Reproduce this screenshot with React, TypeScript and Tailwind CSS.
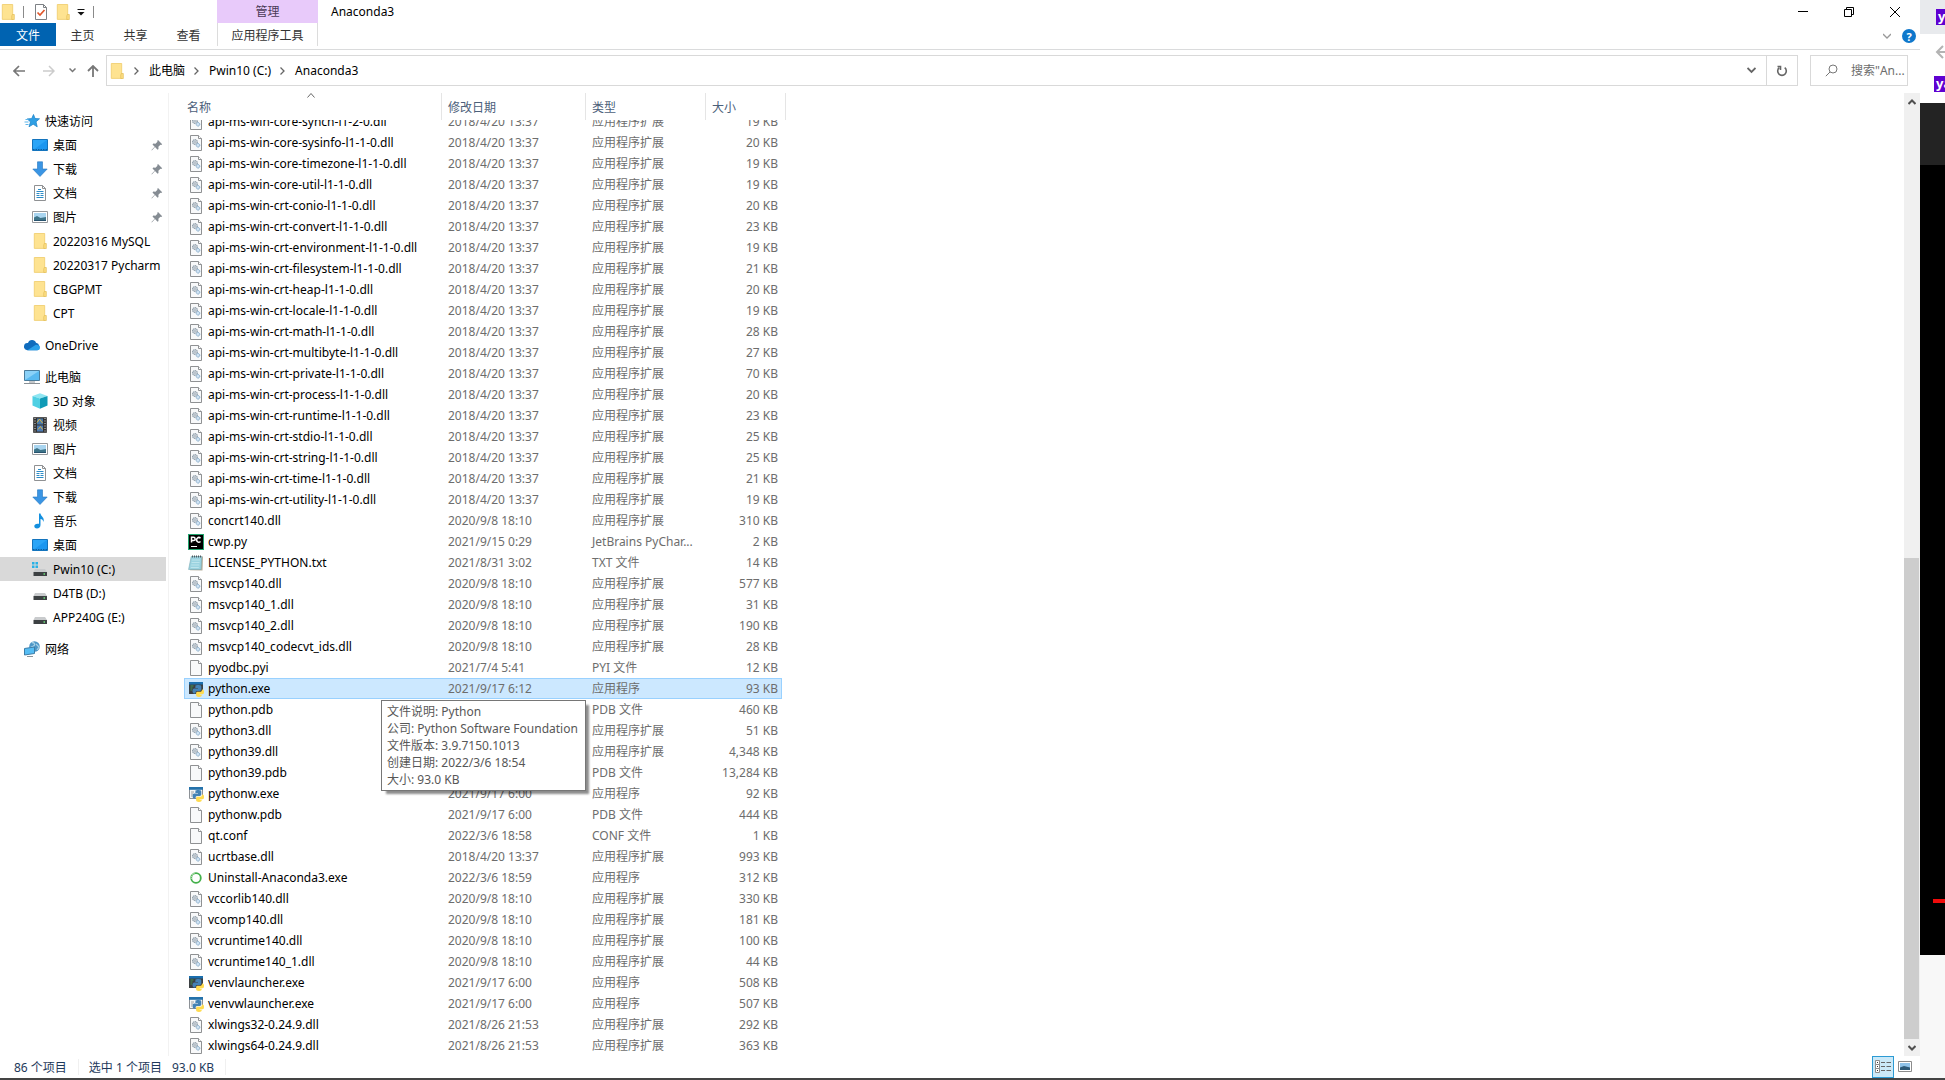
import { useLayoutEffect, useRef } from "react";
import type { ReactNode } from "react";
import clsx from "clsx";

type FileKind = "dll" | "blank" | "txt" | "pycharm" | "python" | "pythonw" | "ring";
type FileRow = [name: string, date: string, type: string, size: string, kind: FileKind];

const DLL = "应用程序扩展";
const EXE = "应用程序";

const files: FileRow[] = [
  ["api-ms-win-core-synch-l1-2-0.dll", "2018/4/20 13:37", DLL, "19 KB", "dll"],
  ["api-ms-win-core-sysinfo-l1-1-0.dll", "2018/4/20 13:37", DLL, "20 KB", "dll"],
  ["api-ms-win-core-timezone-l1-1-0.dll", "2018/4/20 13:37", DLL, "19 KB", "dll"],
  ["api-ms-win-core-util-l1-1-0.dll", "2018/4/20 13:37", DLL, "19 KB", "dll"],
  ["api-ms-win-crt-conio-l1-1-0.dll", "2018/4/20 13:37", DLL, "20 KB", "dll"],
  ["api-ms-win-crt-convert-l1-1-0.dll", "2018/4/20 13:37", DLL, "23 KB", "dll"],
  ["api-ms-win-crt-environment-l1-1-0.dll", "2018/4/20 13:37", DLL, "19 KB", "dll"],
  ["api-ms-win-crt-filesystem-l1-1-0.dll", "2018/4/20 13:37", DLL, "21 KB", "dll"],
  ["api-ms-win-crt-heap-l1-1-0.dll", "2018/4/20 13:37", DLL, "20 KB", "dll"],
  ["api-ms-win-crt-locale-l1-1-0.dll", "2018/4/20 13:37", DLL, "19 KB", "dll"],
  ["api-ms-win-crt-math-l1-1-0.dll", "2018/4/20 13:37", DLL, "28 KB", "dll"],
  ["api-ms-win-crt-multibyte-l1-1-0.dll", "2018/4/20 13:37", DLL, "27 KB", "dll"],
  ["api-ms-win-crt-private-l1-1-0.dll", "2018/4/20 13:37", DLL, "70 KB", "dll"],
  ["api-ms-win-crt-process-l1-1-0.dll", "2018/4/20 13:37", DLL, "20 KB", "dll"],
  ["api-ms-win-crt-runtime-l1-1-0.dll", "2018/4/20 13:37", DLL, "23 KB", "dll"],
  ["api-ms-win-crt-stdio-l1-1-0.dll", "2018/4/20 13:37", DLL, "25 KB", "dll"],
  ["api-ms-win-crt-string-l1-1-0.dll", "2018/4/20 13:37", DLL, "25 KB", "dll"],
  ["api-ms-win-crt-time-l1-1-0.dll", "2018/4/20 13:37", DLL, "21 KB", "dll"],
  ["api-ms-win-crt-utility-l1-1-0.dll", "2018/4/20 13:37", DLL, "19 KB", "dll"],
  ["concrt140.dll", "2020/9/8 18:10", DLL, "310 KB", "dll"],
  ["cwp.py", "2021/9/15 0:29", "JetBrains PyChar...", "2 KB", "pycharm"],
  ["LICENSE_PYTHON.txt", "2021/8/31 3:02", "TXT 文件", "14 KB", "txt"],
  ["msvcp140.dll", "2020/9/8 18:10", DLL, "577 KB", "dll"],
  ["msvcp140_1.dll", "2020/9/8 18:10", DLL, "31 KB", "dll"],
  ["msvcp140_2.dll", "2020/9/8 18:10", DLL, "190 KB", "dll"],
  ["msvcp140_codecvt_ids.dll", "2020/9/8 18:10", DLL, "28 KB", "dll"],
  ["pyodbc.pyi", "2021/7/4 5:41", "PYI 文件", "12 KB", "blank"],
  ["python.exe", "2021/9/17 6:12", EXE, "93 KB", "python"],
  ["python.pdb", "2021/9/17 6:00", "PDB 文件", "460 KB", "blank"],
  ["python3.dll", "2021/9/17 6:00", DLL, "51 KB", "dll"],
  ["python39.dll", "2021/9/17 6:00", DLL, "4,348 KB", "dll"],
  ["python39.pdb", "2021/9/17 6:00", "PDB 文件", "13,284 KB", "blank"],
  ["pythonw.exe", "2021/9/17 6:00", EXE, "92 KB", "pythonw"],
  ["pythonw.pdb", "2021/9/17 6:00", "PDB 文件", "444 KB", "blank"],
  ["qt.conf", "2022/3/6 18:58", "CONF 文件", "1 KB", "blank"],
  ["ucrtbase.dll", "2018/4/20 13:37", DLL, "993 KB", "dll"],
  ["Uninstall-Anaconda3.exe", "2022/3/6 18:59", EXE, "312 KB", "ring"],
  ["vccorlib140.dll", "2020/9/8 18:10", DLL, "330 KB", "dll"],
  ["vcomp140.dll", "2020/9/8 18:10", DLL, "181 KB", "dll"],
  ["vcruntime140.dll", "2020/9/8 18:10", DLL, "100 KB", "dll"],
  ["vcruntime140_1.dll", "2020/9/8 18:10", DLL, "44 KB", "dll"],
  ["venvlauncher.exe", "2021/9/17 6:00", EXE, "508 KB", "python"],
  ["venvwlauncher.exe", "2021/9/17 6:00", EXE, "507 KB", "pythonw"],
  ["xlwings32-0.24.9.dll", "2021/8/26 21:53", DLL, "292 KB", "dll"],
  ["xlwings64-0.24.9.dll", "2021/8/26 21:53", DLL, "363 KB", "dll"],
];

const SELECTED = "python.exe";

function Svg({ children, className }: { children: ReactNode; className?: string }) {
  return (
    <svg viewBox="0 0 16 16" aria-hidden="true" className={clsx("size-4 shrink-0", className)}>
      {children}
    </svg>
  );
}

/* ---------- 文件图标 ---------- */

function PagePaths() {
  return (
    <>
      <path d="M2.500.5h8l3 3v12h-11z" fill="#f8f9fa" stroke="#8f9193" />
      <path d="M10.500.5v3h3" fill="#fff" stroke="#8f9193" />
    </>
  );
}

function PythonLogo() {
  return (
    <>
      <path d="M7.500 4.500c.5-.7 4.500-.8 5.300 0 .6.6.5 1 .5 3.800 0 1.200-.7 1.700-1.700 1.700H9c-1 0-1.500.8-1.500 2.500H6.300c-1.500 0-1.800-1.500-1.800-2.700S5 7.500 6.300 7.500H10V7H7.300z" fill="#4482b5" />
      <path d="M14 8.500h.5c1.200 0 1.500 1.200 1.500 2.500s-.4 2.300-1.600 2.300h-2.800v.5h2.200c0 1.700-1 2.200-2.800 2.200s-2.900-.6-2.900-1.700v-2c0-1 .6-1.500 1.500-1.500h2.600c1.100 0 1.800-.7 1.800-2.300z" fill="#ffdb4f" />
    </>
  );
}

function FileIcon({ kind }: { kind: FileKind }) {
  switch (kind) {
    case "dll":
      return (
        <Svg>
          <PagePaths />
          <circle cx="7" cy="7" r="2.300" fill="#dfe5ea" stroke="#8b9aa6" strokeWidth="1.300" strokeDasharray="1.200 .4" />
          <circle cx="7" cy="7" r=".8" fill="#8b9aa6" />
          <circle cx="10" cy="10.300" r="1.800" fill="#cfe2f3" stroke="#85abca" strokeDasharray="1.200 .3" />
        </Svg>
      );
    case "blank":
      return (
        <Svg>
          <PagePaths />
        </Svg>
      );
    case "txt":
      return (
        <Svg>
          <path d="M4 1.500h11l-.5 14-12.500-.2z" fill="#b7b09c" />
          <path d="M3.200 1.500h10.600l-.8 13H.6z" fill="#9bd3e0" stroke="#78a9b5" strokeWidth=".6" />
          <path d="M4 5h8M3.600 7.500h8M3.200 10h8M2.800 12.500h8" stroke="#c4e8ef" strokeWidth=".8" />
          <path d="M4 1.500h10" stroke="#4e5a60" strokeWidth="2" strokeDasharray="1 1" />
        </Svg>
      );
    case "pycharm":
      return (
        <Svg>
          <rect width="16" height="16" fill="#21a46e" />
          <rect x="1" y="1" width="14" height="14" fill="#000" />
          <path d="M3.500 8.500V3.300h2a1.500 1.500 0 0 1 0 3.200h-2M12.500 4.200a2.300 2.300 0 1 0 0 3.300" fill="none" stroke="#fff" strokeWidth="1.500" />
          <path d="M3 12.500h6" stroke="#fff" />
        </Svg>
      );
    case "python":
      return (
        <Svg>
          <path d="M1 1h14v12H1z" fill="#3c4043" />
          <path d="M1 1h14v2.500H1z" fill="#1b6fae" />
          <path d="M2.500 5h3M2.500 7h2M2.500 9h1.500" stroke="#3f9a55" />
          <PythonLogo />
        </Svg>
      );
    case "pythonw":
      return (
        <Svg>
          <path d="M1.500 1.500h13v11h-13z" fill="#f4f5f6" stroke="#8c9196" />
          <path d="M1 1h14v2.800H1z" fill="#2472ab" />
          <path d="M3 6h3M3 8h2M3 10h1" stroke="#9aa0a5" />
          <PythonLogo />
        </Svg>
      );
    case "ring":
      return (
        <Svg>
          <circle cx="8" cy="8" r="4.800" fill="none" stroke="#43b04a" strokeWidth="1.800" />
          <path d="M3.300 9A4.800 4.800 0 0 1 7 3.300" fill="none" stroke="#a9dcac" strokeWidth="1.800" strokeDasharray="1.200 .7" />
        </Svg>
      );
  }
}

/* ---------- 导航窗格图标 ---------- */

function FolderIcon({ className }: { className?: string }) {
  return (
    <Svg className={className}>
      <path d="M2.300.5h10.400v14.900H2.300z" fill="#fee391" stroke="#efcb68" strokeWidth=".8" />
      <path d="M12.300 10.500h2v5h-2.500v-3.500z" fill="#fddf83" stroke="#e3bd56" strokeWidth=".7" />
    </Svg>
  );
}

const StarIcon = () => (
  <Svg>
    <path d="m9.500 1.500 1.500 4 4.500.3-3.500 3 1.200 5-4-2.600-4.200 2.600 1.500-4.900-3.200-3 4.400-.3z" fill="#2f9fe4" stroke="#2187cb" strokeWidth=".8" />
    <path d="M1.500 6.500h3M.5 9h4M1.500 11.500h3" stroke="#5db5ea" />
  </Svg>
);

const DesktopIcon = () => (
  <Svg>
    <path d="M.5 2.500h15v11H.5z" fill="#2ba5f7" stroke="#1474bd" />
    <path d="M1 13 15 3v10z" fill="#1c97f0" />
    <path d="M1 12.500h14" stroke="#0e5f9f" strokeDasharray="1.500 1" />
  </Svg>
);

const DownloadIcon = () => (
  <Svg>
    <path d="M5.500.8h5V8h4.700L8 15.500.8 8h4.700z" fill="#3a95e4" stroke="#2376c0" strokeWidth=".6" />
  </Svg>
);

const DocumentIcon = () => (
  <Svg>
    <path d="M2.500.5h8l3 3v12h-11z" fill="#fff" stroke="#8f9193" />
    <path d="M10.500.5v3h3" fill="none" stroke="#8f9193" />
    <path d="M6 4.500h3M4.500 6.500h7M4.500 8.500h3M8.500 8.500h3M4.500 10.500h3M8.500 10.500h3M4.500 12.500h7" stroke="#2d8cc7" />
  </Svg>
);

const PictureIcon = () => (
  <Svg>
    <path d="M.5 2.500h15v11H.5z" fill="#fff" stroke="#96999c" />
    <path d="M2 4h12v8H2z" fill="#a9d5f0" />
    <path d="M2 8.500 5 7l3.500 2L14 8v4H2z" fill="#3e7489" />
    <path d="M2 11h12v1H2z" fill="#28536e" />
  </Svg>
);

const CloudIcon = () => (
  <Svg>
    <path d="M4 6a4.200 4.200 0 0 1 8-.2 4 4 0 0 1 1.500 7.400H3.200A3.600 3.600 0 0 1 4 6z" fill="#0f6cbd" />
    <path d="m3.500 13.300 8.300-5.500c2 0 4.200.7 4.200 3 0 1.700-1.200 2.500-2.500 2.500z" fill="#2aa1ea" />
  </Svg>
);

const ComputerIcon = () => (
  <Svg>
    <path d="M.5 1.500h15v10H.5z" fill="#58b9f0" stroke="#4a7c9c" />
    <path d="M1 2h14L1 11z" fill="#8ad1f8" />
    <path d="M0 14.500h16M5 13h6" stroke="#8a9095" />
  </Svg>
);

const CubeIcon = () => (
  <Svg>
    <path d="M8 .3 15.500 3 8 5.500.5 3z" fill="#8fe6f2" />
    <path d="M.5 3 8 5.500v10.200L.5 12.500z" fill="#4fd0e3" />
    <path d="M15.500 3 8 5.500v10.200l7.500-3.200z" fill="#0f9ab6" />
  </Svg>
);

const VideoIcon = () => (
  <Svg>
    <path d="M1.500.5h13v15h-13z" fill="#333" stroke="#555" />
    <path d="M5 1.500h6v6H5z" fill="#4a79a8" />
    <path d="M5 8.500h6v6H5z" fill="#4c7bb4" />
    <path d="M5 5.500 7.500 2l3 4M6 12.500l2.500-3 2 3" fill="none" stroke="#d9b544" />
    <path d="M3 1v14M13 1v14" stroke="#ddd" strokeDasharray="1 1.500" />
  </Svg>
);

const MusicIcon = () => (
  <Svg>
    <path d="M7 .5h1.500c.3 3 4.500 4 3 8.500-.4-2-1.500-2.800-3-3V12c0 2-1.500 3.500-3.500 3.500S2.300 14.500 2.300 13 4 10.300 7 10.800z" fill="#1490df" />
  </Svg>
);

function DriveIcon({ system }: { system?: boolean }) {
  return (
    <Svg>
      {system && <path d="M0 1h2.500v2.500H0zM3.500 1H6v2.500H3.500zM0 4.500h2.500V7H0zM3.500 4.500H6V7H3.500z" fill="#29b1e6" />}
      <path d="M3 8h10l2 3H1.500z" fill="#c9cbcd" />
      <path d="M1.500 11H15v4H1.500z" fill="#3d4143" />
      <path d="M11.500 13h1.500" stroke="#6be07a" strokeWidth="1.500" />
    </Svg>
  );
}

const NetworkIcon = () => (
  <Svg>
    <circle cx="10.500" cy="5.500" r="5.300" fill="#4d96c6" />
    <path d="M8 1.500c2 0 3 1 2.500 2.500S7 6 6 7M12 3l3 3-2 3" fill="none" stroke="#a5d0e6" strokeWidth="1.300" />
    <path d="M.5 7.500 10.500 6v6.500L.5 14z" fill="#55bdf4" stroke="#3c7da8" />
    <path d="M3 15.500h6" stroke="#8b9499" />
  </Svg>
);

const PinIcon = () => (
  <svg viewBox="0 0 12 12" aria-hidden="true" className="size-3 shrink-0 fill-[#858c93]">
    <path d="m7 1 4.200 4.200-1 .8-.8-.2-2 2 .1 2.200-.9.700-2.600-2.600L.8 11.400l-.3-.3 3.200-3.300L1.500 5.500l.8-.9 2.200.1 2-2-.3-.8z" />
  </svg>
);

interface NavItemProps {
  icon: ReactNode;
  label: string;
  root?: boolean;
  pinned?: boolean;
  active?: boolean;
}

function NavItem({ icon, label, root, pinned, active }: NavItemProps) {
  return (
    <li>
      <a
        href="#"
        className={clsx(
          "mr-0.5 flex h-6 items-center gap-[5px] pr-[3px]",
          root ? "pl-6" : "pl-8",
          active && "bg-[#d9d9d9]"
        )}
      >
        {icon}
        <span className="flex-1 whitespace-nowrap">{label}</span>
        {pinned && <PinIcon />}
      </a>
    </li>
  );
}

function Sidebar() {
  return (
    <nav aria-label="导航窗格" className="flex w-[169px] shrink-0 flex-col gap-2 border-r border-[#f2f2f2] pt-4">
      <ul>
        <NavItem root icon={<StarIcon />} label="快速访问" />
        <NavItem pinned icon={<DesktopIcon />} label="桌面" />
        <NavItem pinned icon={<DownloadIcon />} label="下载" />
        <NavItem pinned icon={<DocumentIcon />} label="文档" />
        <NavItem pinned icon={<PictureIcon />} label="图片" />
        <NavItem icon={<FolderIcon />} label="20220316 MySQL" />
        <NavItem icon={<FolderIcon />} label="20220317 Pycharm" />
        <NavItem icon={<FolderIcon />} label="CBGPMT" />
        <NavItem icon={<FolderIcon />} label="CPT" />
      </ul>
      <ul>
        <NavItem root icon={<CloudIcon />} label="OneDrive" />
      </ul>
      <ul>
        <NavItem root icon={<ComputerIcon />} label="此电脑" />
        <NavItem icon={<CubeIcon />} label="3D 对象" />
        <NavItem icon={<VideoIcon />} label="视频" />
        <NavItem icon={<PictureIcon />} label="图片" />
        <NavItem icon={<DocumentIcon />} label="文档" />
        <NavItem icon={<DownloadIcon />} label="下载" />
        <NavItem icon={<MusicIcon />} label="音乐" />
        <NavItem icon={<DesktopIcon />} label="桌面" />
        <NavItem active icon={<DriveIcon system />} label="Pwin10 (C:)" />
        <NavItem icon={<DriveIcon />} label="D4TB (D:)" />
        <NavItem icon={<DriveIcon />} label="APP240G (E:)" />
      </ul>
      <ul>
        <NavItem root icon={<NetworkIcon />} label="网络" />
      </ul>
    </nav>
  );
}

function TitleBar() {
  return (
    <header className="flex h-[23px] items-center">
      <div className="flex w-[217px] items-center">
        <FolderIcon />
        <span className="ml-[7px] h-3 w-px bg-[#8a8a8a]" />
        <button type="button" aria-label="属性" className="ml-[9px]">
          <Svg>
            <path d="M2.500.5h8l3 3v12h-11z" fill="#fff" stroke="#7d8185" />
            <path d="M10.500.5v3h3" fill="none" stroke="#7d8185" />
            <path d="m4.500 8.500 2.500 2.500 4.500-5" fill="none" stroke="#e0562b" strokeWidth="1.700" />
          </Svg>
        </button>
        <button type="button" aria-label="新建文件夹" className="ml-[6px]">
          <FolderIcon />
        </button>
        <button type="button" aria-label="自定义快速访问工具栏" className="ml-[6px]">
          <svg viewBox="0 0 8 8" className="h-2 w-2">
            <path d="M.5 1.500h7" stroke="#111" />
            <path d="M.5 4h7L4 7.500z" fill="#111" />
          </svg>
        </button>
        <span className="ml-[8px] h-3 w-px bg-[#8a8a8a]" />
      </div>
      <div className="flex h-full w-[101px] items-center justify-center bg-[#e8cafa] text-[#4b3a57]">管理</div>
      <h1 className="ml-[13px] flex-1">Anaconda3</h1>
      <div className="mr-0.5 flex">
        <button type="button" aria-label="最小化" className="flex h-5 w-[46px] items-center justify-center">
          <span className="h-px w-2.5 bg-black" />
        </button>
        <button type="button" aria-label="还原" className="flex h-5 w-[46px] items-center justify-center">
          <svg viewBox="0 0 10 10" className="size-2.5" fill="none" stroke="#000">
            <path d="M.5 2.500h7v7h-7zM2.500 2.500v-2h7v7h-2" />
          </svg>
        </button>
        <button type="button" aria-label="关闭" className="flex h-5 w-[46px] items-center justify-center">
          <svg viewBox="0 0 10 10" className="size-2.5" fill="none" stroke="#000">
            <path d="m0 0 10 10M10 0 0 10" />
          </svg>
        </button>
      </div>
    </header>
  );
}

function RibbonTabs() {
  return (
    <div className="flex h-[27px] items-start border-b border-[#dadbdc] text-[#333]">
      <button type="button" className="h-[23px] w-14 bg-[#0063b1] pt-px text-white">文件</button>
      <button type="button" className="h-[23px] w-[53px] pt-px">主页</button>
      <button type="button" className="h-[23px] w-[53px] pt-px">共享</button>
      <button type="button" className="mr-0.5 h-[23px] w-[53px] pt-px">查看</button>
      <button type="button" className="h-[23px] w-[101px] border-x border-[#dcdcdc] pt-px">应用程序工具</button>
      <div className="ml-auto flex h-[26px] items-center gap-[11px] pr-1">
        <button type="button" aria-label="展开功能区">
          <svg viewBox="0 0 8 6" className="h-1.5 w-2" fill="none" stroke="#999" strokeWidth="1.300">
            <path d="m0 1 4 4 4-4" />
          </svg>
        </button>
        <button
          type="button"
          aria-label="帮助"
          className="flex size-3.5 items-center justify-center rounded-full bg-[#0f78cc] text-[11px] font-bold text-white"
        >
          ?
        </button>
      </div>
    </div>
  );
}

function Crumb({ children }: { children: ReactNode }) {
  return (
    <li className="flex items-center">
      <svg viewBox="0 0 5 8" className="mr-[10px] ml-[9px] h-2 w-[5px]" fill="none" stroke="#666" strokeWidth="1.300">
        <path d="m.5.5 3.500 3.500L.5 7.500" />
      </svg>
      <a href="#">{children}</a>
    </li>
  );
}

function AddressBar() {
  return (
    <div className="flex h-[43px] items-center pt-[5px] pr-3 pb-[7px]">
      <div className="flex w-[106px] items-center">
        <button type="button" aria-label="后退" className="ml-[13px]">
          <svg viewBox="0 0 12 12" className="size-3" fill="none" stroke="#777" strokeWidth="1.700">
            <path d="M12 6H1.500M6 1 1 6l5 5" />
          </svg>
        </button>
        <button type="button" aria-label="前进" className="ml-[18px]">
          <svg viewBox="0 0 12 12" className="size-3" fill="none" stroke="#ccc" strokeWidth="1.500">
            <path d="M0 6h10.500M6 1l5 5-5 5" />
          </svg>
        </button>
        <button type="button" aria-label="最近浏览的位置" className="ml-[14px]">
          <svg viewBox="0 0 7 5" className="h-[5px] w-[7px]" fill="none" stroke="#777" strokeWidth="1.500">
            <path d="m.5.5 3 3 3-3" />
          </svg>
        </button>
        <button type="button" aria-label="上移" className="ml-[11px]">
          <svg viewBox="0 0 12 12" className="size-3" fill="none" stroke="#777" strokeWidth="1.800">
            <path d="M6 12V1.500M1 6l5-5 5 5" />
          </svg>
        </button>
      </div>
      <div className="flex h-[31px] flex-1 items-center border border-[#d9d9d9] pl-[2px]">
        <FolderIcon />
        <ol className="flex flex-1">
          <Crumb>此电脑</Crumb>
          <Crumb>Pwin10 (C:)</Crumb>
          <Crumb>Anaconda3</Crumb>
        </ol>
        <button type="button" aria-label="上一个位置" className="flex h-full w-[29px] items-center justify-center">
          <svg viewBox="0 0 9 7" className="h-[7px] w-[9px]" fill="none" stroke="#666" strokeWidth="1.800">
            <path d="m.5 1 4 4 4-4" />
          </svg>
        </button>
        <button
          type="button"
          aria-label="刷新"
          className="flex h-full w-[31px] items-center justify-center border-l border-[#d9d9d9]"
        >
          <svg viewBox="0 0 12 12" className="size-3" fill="none" stroke="#666" strokeWidth="1.600">
            <path d="M3.300 2.700A4.300 4.300 0 1 0 8.700 2.700" />
            <path d="M1.500 1.500h3V5" />
          </svg>
        </button>
      </div>
      <label className="ml-3 flex h-[31px] w-[98px] items-center border border-[#d9d9d9] pl-[14px]">
        <svg viewBox="0 0 13 13" className="size-[13px] shrink-0" fill="none" stroke="#777">
          <circle cx="8" cy="5" r="4" />
          <path d="M5 8 .8 12.200" />
        </svg>
        <input
          type="text"
          aria-label="搜索"
          placeholder={'搜索"An...'}
          className="ml-[13px] w-full min-w-0 outline-none placeholder:text-[#6d6d6d]"
        />
      </label>
    </div>
  );
}

function FileTooltip() {
  return (
    <div
      role="tooltip"
      className="absolute top-[21px] left-[196px] z-10 border border-[#767676] bg-white py-[2px] pr-[7px] pl-[5px] leading-[17px] whitespace-nowrap text-[#575757] shadow-[4px_4px_2px_-1px_rgba(0,0,0,0.45)]"
    >
      <p>文件说明: Python</p>
      <p>公司: Python Software Foundation</p>
      <p>文件版本: 3.9.7150.1013</p>
      <p>创建日期: 2022/3/6 18:54</p>
      <p>大小: 93.0 KB</p>
    </div>
  );
}

function FileList() {
  const scroller = useRef<HTMLDivElement>(null);

  // 默认滚动到列表底部
  useLayoutEffect(() => {
    if (scroller.current) scroller.current.scrollTop = scroller.current.scrollHeight;
  }, []);

  return (
    <div ref={scroller} className="min-w-0 flex-1 overflow-hidden pl-[15px]">
      <table className="w-[602px] table-fixed border-separate border-spacing-0">
        <colgroup>
          <col className="w-[258px]" />
          <col className="w-[144px]" />
          <col className="w-[120px]" />
          <col className="w-[76px]" />
          <col className="w-1" />
        </colgroup>
        <thead className="sticky top-0 z-20 bg-white text-left text-[#4c607a]">
          <tr className="h-[27px]">
            <th scope="col" className="relative border-r border-[#e5e5e5] p-0 pt-px pl-[3px] font-normal">
              名称
              <svg viewBox="0 0 8 5" className="absolute top-0 left-[123px] h-[5px] w-2" fill="none" stroke="#666">
                <path d="m.5 4.500 3.500-4 3.500 4" />
              </svg>
            </th>
            <th scope="col" className="border-r border-[#e5e5e5] p-0 pt-px pl-[6px] font-normal">修改日期</th>
            <th scope="col" className="border-r border-[#e5e5e5] p-0 pt-px pl-[6px] font-normal">类型</th>
            <th scope="col" colSpan={2} className="border-r border-[#e5e5e5] p-0 pt-px pl-[6px] font-normal">大小</th>
          </tr>
        </thead>
        <tbody className="text-[#6d6d6d]">
          {files.map(([name, date, type, size, kind]) => {
            const selected = name === SELECTED;
            const cell = clsx(
              "h-[21px] border-y p-0 whitespace-nowrap",
              selected ? "border-[#99d1ff] bg-[#cce8ff]" : "border-transparent"
            );
            return (
              <tr key={name}>
                <td className={clsx(cell, "relative border-l")}>
                  <div className="flex items-center gap-1 pl-[3px]">
                    <FileIcon kind={kind} />
                    <span className="text-black">{name}</span>
                  </div>
                  {selected && <FileTooltip />}
                </td>
                <td className={clsx(cell, "pl-[6px]")}>{date}</td>
                <td className={clsx(cell, "pl-[6px]")}>{type}</td>
                <td className={clsx(cell, "border-r pr-[3px] text-right")}>{size}</td>
                <td className="p-0" />
              </tr>
            );
          })}
        </tbody>
      </table>
    </div>
  );
}

function ScrollBar() {
  return (
    <div className="flex w-4 shrink-0 flex-col bg-[#f0f0f0]">
      <button type="button" aria-label="向上滚动" className="flex h-[17px] items-center justify-center">
        <svg viewBox="0 0 8 6" className="h-1.5 w-2" fill="none" stroke="#505050" strokeWidth="2">
          <path d="m.5 5 3.500-3.500L7.500 5" />
        </svg>
      </button>
      <div className="grow-[448]" />
      <div className="mr-px grow-[481] bg-[#cdcdcd]" />
      <button type="button" aria-label="向下滚动" className="flex h-[17px] items-center justify-center">
        <svg viewBox="0 0 8 6" className="h-1.5 w-2" fill="none" stroke="#505050" strokeWidth="2">
          <path d="m.5 1 3.500 3.500L7.500 1" />
        </svg>
      </button>
    </div>
  );
}

function StatusBar() {
  return (
    <footer className="flex h-[22px] shrink-0 items-center pl-[14px] text-[#1e395b]">
      <span className="pt-px">86 个项目</span>
      <span className="mr-[10px] ml-[11px] h-4 w-px bg-[#f0f0f0]" />
      <span className="pt-px">选中 1 个项目</span>
      <span className="ml-[10px] pt-px">93.0 KB</span>
      <span className="ml-[11px] h-4 w-px bg-[#f0f0f0]" />
      <div className="ml-auto flex h-full pr-1">
        <button
          type="button"
          aria-label="详细信息"
          className="flex h-full w-[22px] items-center justify-center border border-[#2c9bd4] bg-[#cbe9f8]"
        >
          <svg viewBox="0 0 16 14" className="h-3.5 w-4 shrink-0" fill="none">
            <path d="M.5.5h4v4h-4zM.5 4.500h4v4h-4zM.5 8.500h4v4h-4z" fill="#fff" stroke="#8c8c8c" />
            <path d="M2 2.500h1M2 6.500h1M2 10.500h1" stroke="#333" />
            <path d="M6 2.500h4M11.500 2.500H16M6 6.500h4M11.500 6.500H16M6 10.500h4M11.500 10.500H16" stroke="#666" />
          </svg>
        </button>
        <button type="button" aria-label="大图标" className="flex h-full w-[22px] items-center justify-center">
          <svg viewBox="0 0 14 12" className="h-3 w-3.5">
            <path d="M.5.5h13v10H.5z" fill="#fff" stroke="#8c8c8c" />
            <path d="M2 2h10v7H2z" fill="#8fc3ea" />
            <path d="M2 6.500 6 5l6 1.500V9H2z" fill="#2d5a78" />
          </svg>
        </button>
      </div>
    </footer>
  );
}

// 露出一条边的浏览器窗口
function BrowserEdge() {
  return (
    <aside className="flex w-[25px] shrink-0 flex-col overflow-hidden bg-[#f8f8f8]">
      <div className="flex h-[34px] items-center justify-end bg-[#e8eaed]">
        <span className="h-4 w-[9px] overflow-hidden bg-[#5f01d1] pl-[2px] text-[13px] leading-[14px] font-bold text-white">
          y
        </span>
      </div>
      <div className="flex h-[69px] flex-col items-end justify-between bg-white pt-[11px] pb-[11px]">
        <svg viewBox="0 0 10 14" className="h-3.5 w-2.5" fill="none" stroke="#b3b3b3" strokeWidth="2">
          <path d="M8 1 2 7l6 6M2 7h8" />
        </svg>
        <span className="h-4 w-[11px] overflow-hidden bg-[#5f01d1] pl-[2px] text-[13px] leading-[14px] font-bold text-white">
          ya
        </span>
      </div>
      <div className="h-[62px] bg-[#232323]" />
      <div className="flex grow-[789] flex-col items-end bg-black">
        <div className="grow-[733]" />
        <div className="h-1 w-3 bg-[#f00b0b]" />
        <div className="grow-[52]" />
      </div>
      <div className="grow-[124]" />
    </aside>
  );
}

export default function App() {
  return (
    <div className="flex h-screen flex-col overflow-hidden bg-white font-['Noto_Sans','Noto_Sans_CJK_SC',sans-serif] text-[12px] leading-[19px] text-black">
      <div className="flex min-h-0 flex-1">
        <main className="flex min-w-0 flex-1 flex-col">
          <TitleBar />
          <RibbonTabs />
          <AddressBar />
          <div className="flex min-h-0 flex-1">
            <Sidebar />
            <FileList />
            <ScrollBar />
          </div>
          <StatusBar />
        </main>
        <BrowserEdge />
      </div>
      <div className="h-0.5 shrink-0 bg-[#444]" />
    </div>
  );
}
